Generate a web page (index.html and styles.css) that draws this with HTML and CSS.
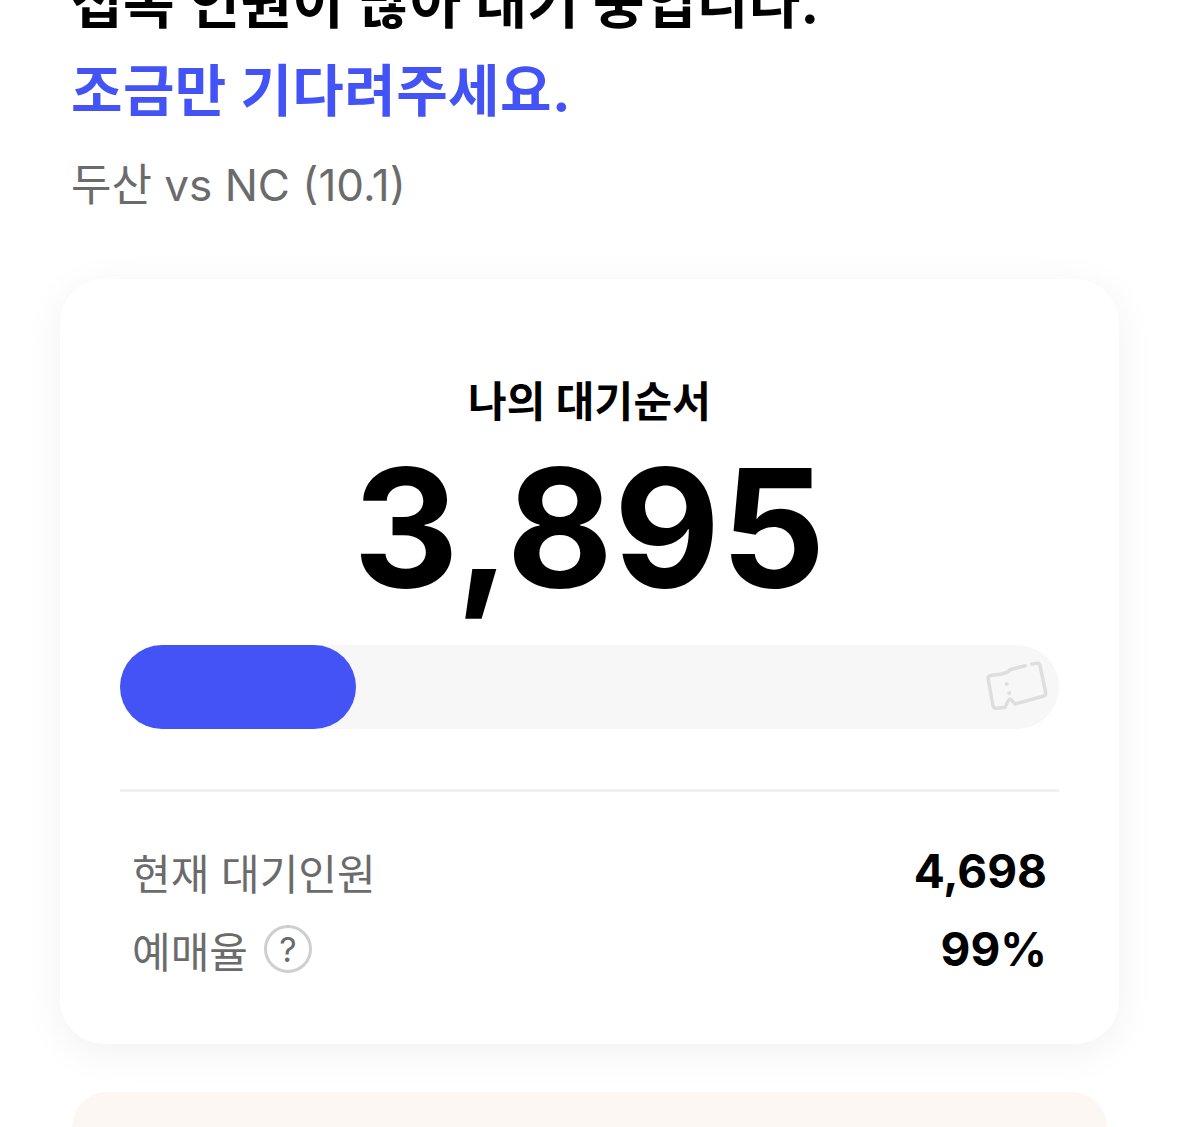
FILE: index.html
```html
<!DOCTYPE HTML>
<html lang="ko">
<head>
<meta charset="utf-8">
<title>대기순서</title>
<link rel="stylesheet" href="styles.css">
</head>

<body>
<div class="page">
	<div class="head">
		<h1 class="title">접속 인원이 많아 대기 중입니다.</h1>
		<h1 class="title blue">조금만 기다려주세요.</h1>
		<p class="game">두산 vs NC (10.1)</p>
	</div>
	<div class="card">
		<p class="my">나의 대기순서</p>
		<p class="num">3,895</p>
		<div class="bar">
			<div class="fill"></div>
			<svg class="ticket" width="70" height="56" viewBox="0 0 70 56" fill="none">
				<path d="M43 6.700L28 10.700C27 12.500 26 13 24.700 13.300L19.700 15L8.500 16.500C6.500 17 5.800 18.500 6.300 20.500L11 46.700C11.500 48.800 13 49.500 14.700 49.300L23 48.300C24.500 46.500 25.500 41 28 40C30 40.500 31.500 44 33 45L61 37.300C63 36.800 64 35.500 63.700 33.500L58 6.700C57.500 4.800 56.500 4 55.300 4.300L49.700 5" stroke="#dedede" stroke-width="3.500" stroke-linecap="round" stroke-linejoin="round"/>
				<circle cx="24.700" cy="25" r="2" fill="#dedede"/>
				<circle cx="27.300" cy="34" r="2" fill="#dedede"/>
			</svg>
		</div>
		<div class="line"></div>
		<div class="row">
			<span class="label">현재 대기인원</span>
			<b class="val">4,698</b>
		</div>
		<div class="row">
			<span class="label">예매율 <i class="help">?</i></span>
			<b class="val">99%</b>
		</div>
	</div>
	<div class="notice"></div>
</div>
</body>
</html>
```

FILE: styles.css
```css
* {margin:0; padding:0; box-sizing:border-box;}
html, body {height:100%; overflow:hidden; background:#fff;}
body {font-family:"Inter","Noto Sans CJK KR",sans-serif; color:#000;}

.page {margin-top:-41px; padding:0 60px;}
.head {padding:0 11px;}
.title {font-size:56px; line-height:88px; font-weight:700; letter-spacing:0.4px; white-space:nowrap;}
.blue {color:#4353f5;}
.game {font-size:44px; line-height:60px; margin-top:20px; color:#6b6b6b;}

.card {margin-top:64px; height:765px; padding:95px 60px 0; background:#fff; border-radius:44px; box-shadow:0 8px 40px rgba(0,0,0,0.06);}
.my {font-size:42px; line-height:56px; font-weight:700; text-align:center; letter-spacing:0.2px;}
.num {font-size:164px; line-height:180px; font-weight:700; text-align:center; letter-spacing:0.5px; margin-top:8px;}
.bar {height:84px; margin-top:27px; background:#f7f7f7; border-radius:42px; display:flex; justify-content:space-between; align-items:center; padding-right:7px;}
.fill {width:236px; height:84px; background:#4353f5; border-radius:42px;}
.line {height:3px; background:#f0f0f0; margin-top:60px;}
.row {display:flex; justify-content:space-between; align-items:center; padding:0 12px; height:78px;}
.line + .row {margin-top:40px;}
.label {font-size:42px; color:#6b6b6b; display:flex; align-items:center; gap:16px;}
.val {font-size:46px; font-weight:700;}
.help {width:48px; height:48px; border:3px solid #cfcfcf; border-radius:50%; font-size:34px; font-style:normal; color:#6b6b6b; display:flex; align-items:center; justify-content:center;}

.notice {height:35px; margin:48px 12px 0; background:#fdf7f3; border-radius:40px 40px 0 0;}
```
